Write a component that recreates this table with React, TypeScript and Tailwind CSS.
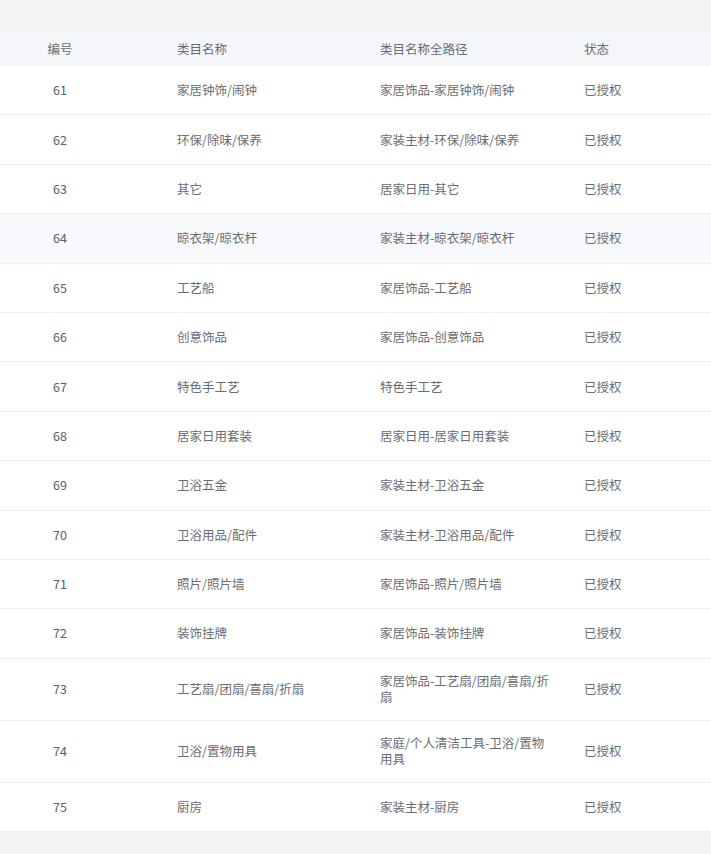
const rows: { id: number; name: string; path: string; hover?: boolean }[] = [
  { id: 61, name: '家居钟饰/闹钟', path: '家居饰品-家居钟饰/闹钟' },
  { id: 62, name: '环保/除味/保养', path: '家装主材-环保/除味/保养' },
  { id: 63, name: '其它', path: '居家日用-其它' },
  { id: 64, name: '晾衣架/晾衣杆', path: '家装主材-晾衣架/晾衣杆', hover: true },
  { id: 65, name: '工艺船', path: '家居饰品-工艺船' },
  { id: 66, name: '创意饰品', path: '家居饰品-创意饰品' },
  { id: 67, name: '特色手工艺', path: '特色手工艺' },
  { id: 68, name: '居家日用套装', path: '居家日用-居家日用套装' },
  { id: 69, name: '卫浴五金', path: '家装主材-卫浴五金' },
  { id: 70, name: '卫浴用品/配件', path: '家装主材-卫浴用品/配件' },
  { id: 71, name: '照片/照片墙', path: '家居饰品-照片/照片墙' },
  { id: 72, name: '装饰挂牌', path: '家居饰品-装饰挂牌' },
  { id: 73, name: '工艺扇/团扇/喜扇/折扇', path: '家居饰品-工艺扇/团扇/喜扇/折扇' },
  { id: 74, name: '卫浴/置物用具', path: '家庭/个人清洁工具-卫浴/置物用具' },
  { id: 75, name: '厨房', path: '家装主材-厨房' },
]

export default function App() {
  return (
    <div
      className="w-[711px] min-h-[854px] bg-[#f5f5f5] text-[12.5px] text-[#6a6d72]"
      style={{ fontFamily: '"Noto Sans CJK SC", "Noto Sans", sans-serif' }}
    >
      <div className="h-[32px]" />

      {/* Header */}
      <div className="grid grid-cols-[120px_260px_204px_1fr] items-center h-[34px] bg-[#f4f6f9] leading-[16px]">
        <div className="text-center">编号</div>
        <div className="pl-[57px]">类目名称</div>
        <div>类目名称全路径</div>
        <div>状态</div>
      </div>

      {/* Body */}
      <div className="bg-white">
        {rows.map((r) => (
          <div
            key={r.id}
            className={`grid grid-cols-[120px_260px_204px_1fr] items-center min-h-[49.4px] border-b border-[#eef0f4] leading-[16px] ${
              r.hover ? 'bg-[#f7f9fc]' : ''
            }`}
          >
            <div className="py-[14.5px] text-center text-[#5a5e64]">{r.id}</div>
            <div className="py-[14.5px] pl-[57px]">{r.name}</div>
            <div className="py-[14.5px] pr-[34px]">{r.path}</div>
            <div className="py-[14.5px]">已授权</div>
          </div>
        ))}
      </div>
    </div>
  )
}
